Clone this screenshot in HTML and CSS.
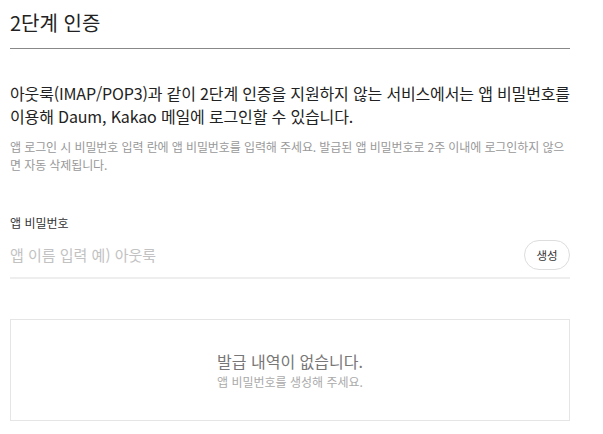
FILE: index.html
```html
<!DOCTYPE html>
<html lang="ko">
<head>
    <meta charset="UTF-8">
    <title>2단계 인증</title>
    <link rel="stylesheet" href="styles.css">
</head>
<body>
    <div class="section">
        <h2 class="title">2단계 인증</h2>

        <p class="desc">아웃룩(IMAP/POP3)과 같이 2단계 인증을 지원하지 않는 서비스에서는 앱 비밀번호를 이용해 Daum, Kakao 메일에 로그인할 수 있습니다.</p>
        <p class="sub">앱 로그인 시 비밀번호 입력 란에 앱 비밀번호를 입력해 주세요. 발급된 앱 비밀번호로 2주 이내에 로그인하지 않으면 자동 삭제됩니다.</p>

        <div class="field">
            <label for="app-name">앱 비밀번호</label>
            <div class="input-row">
                <input type="text" id="app-name" placeholder="앱 이름 입력 예) 아웃룩">
                <button class="btn">생성</button>
            </div>
        </div>

        <div class="empty">
            <strong>발급 내역이 없습니다.</strong>
            <span>앱 비밀번호를 생성해 주세요.</span>
        </div>
    </div>
</body>
</html>
```

FILE: styles.css
```css
body {
    margin: 0;
    padding: 0 33px 0 10px;
    font-family: "Noto Sans CJK KR", "Noto Sans", sans-serif;
    color: #222;
    background-color: white;
}
.section {
    width: 560px;
}
.title {
    margin: 0;
    padding: 10px 0 12px;
    font-size: 20px;
    font-weight: normal;
    line-height: 26px;
    border-bottom: 1px solid #888;
}
.desc {
    margin: 33px 0 0;
    font-size: 16px;
    line-height: 23px;
    letter-spacing: -0.15px;
}
.sub {
    margin: 10px 0 0;
    font-size: 12px;
    line-height: 18px;
    letter-spacing: -0.1px;
    color: #999;
    word-break: break-all;
}
.field {
    margin-top: 40px;
}
label {
    display: block;
    font-size: 12px;
    line-height: 18px;
    color: #333;
}
.input-row {
    display: flex;
    align-items: center;
    margin-top: 8px;
    padding-bottom: 7px;
    border-bottom: 2px solid #eee;
}
input {
    flex: 1;
    border: none;
    outline: none;
    padding: 0;
    font-family: inherit;
    font-size: 15px;
    line-height: 22px;
    color: #222;
}
input::placeholder {
    color: #c2c2c2;
}
.btn {
    width: 46px;
    height: 30px;
    border: 1px solid #ddd;
    border-radius: 15px;
    background-color: white;
    font-family: inherit;
    font-size: 11.5px;
    color: #333;
    padding: 0;
    cursor: pointer;
}
.empty {
    margin-top: 40px;
    height: 100px;
    border: 1px solid #e5e5e5;
    display: flex;
    flex-direction: column;
    align-items: center;
    justify-content: center;
}
.empty strong {
    font-size: 16px;
    font-weight: normal;
    line-height: 22px;
    color: #777;
}
.empty span {
    margin-top: 2px;
    font-size: 12px;
    line-height: 16px;
    color: #aaa;
}
```
